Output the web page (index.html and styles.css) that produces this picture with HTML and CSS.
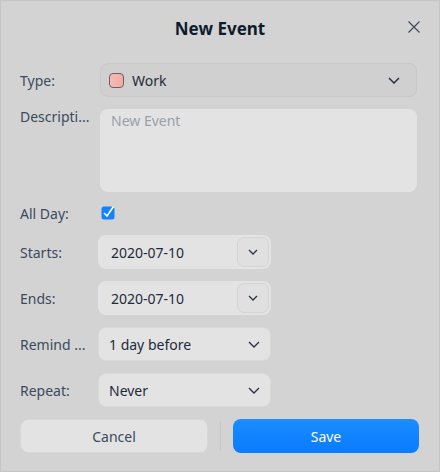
FILE: index.html
```html
<!DOCTYPE html>
<html>
<head>
<meta charset="utf-8">
<link rel="stylesheet" href="styles.css">
</head>
<body>
<div class="dialog">
  <div class="titlebar">
    <div class="title">New Event</div>
    <svg class="close" width="12" height="12" viewBox="0 0 12 12"><path d="M0.5 0.5L11.5 11.5M11.5 0.5L0.5 11.5" stroke="#3c4555" stroke-width="1.1" fill="none"/></svg>
  </div>
  <div class="form">
    <div class="label lab-mid">Type:</div>
    <div class="combo wide">
      <span class="swatch"></span><span class="val">Work</span>
      <svg class="chev" width="12" height="7" viewBox="0 0 12 7"><path d="M1 1L6 6L11 1" stroke="#2a3242" stroke-width="1.5" fill="none"/></svg>
    </div>

    <div class="label lab-top">Descripti...</div>
    <div class="textarea">New Event</div>

    <div class="label lab-mid">All Day:</div>
    <div class="checkrow">
      <svg width="16" height="16" viewBox="0 0 16 16"><rect x="0.5" y="2.5" width="13" height="13" rx="2.5" fill="#1482fa"/><path d="M3 9L6 12L12.5 2.5" stroke="#fff" stroke-width="1.6" fill="none"/></svg>
    </div>

    <div class="label lab-mid">Starts:</div>
    <div class="datebox"><span class="val">2020-07-10</span><span class="dbtn"><svg width="10" height="6" viewBox="0 0 10 6"><path d="M1 1L5 5L9 1" stroke="#2a3242" stroke-width="1.3" fill="none"/></svg></span></div>

    <div class="label lab-mid">Ends:</div>
    <div class="datebox"><span class="val">2020-07-10</span><span class="dbtn"><svg width="10" height="6" viewBox="0 0 10 6"><path d="M1 1L5 5L9 1" stroke="#2a3242" stroke-width="1.3" fill="none"/></svg></span></div>

    <div class="label lab-mid">Remind ...</div>
    <div class="combo short"><span class="val">1 day before</span><svg class="chev" width="12" height="7" viewBox="0 0 12 7"><path d="M1 1L6 6L11 1" stroke="#2a3242" stroke-width="1.4" fill="none"/></svg></div>

    <div class="label lab-mid">Repeat:</div>
    <div class="combo short"><span class="val">Never</span><svg class="chev" width="12" height="7" viewBox="0 0 12 7"><path d="M1 1L6 6L11 1" stroke="#2a3242" stroke-width="1.4" fill="none"/></svg></div>
  </div>
  <div class="buttons">
    <div class="btn cancel">Cancel</div>
    <div class="sep"></div>
    <div class="btn save">Save</div>
  </div>
</div>
</body>
</html>
```

FILE: styles.css
```css
html, body {
  margin: 0;
  padding: 0;
  background: #d3d3d3;
}
body {
  width: 440px;
  height: 472px;
  font-family: "Noto Sans", "Open Sans", sans-serif;
  font-size: 14px;
  color: #3a4454;
}
.dialog {
  box-sizing: border-box;
  width: 440px;
  height: 472px;
  border: 1px solid #c6c6c6;
  background: #d3d3d3;
  display: flex;
  flex-direction: column;
}
.titlebar {
  height: 54px;
  position: relative;
  display: flex;
  align-items: center;
  justify-content: center;
}
.title {
  font-size: 17px;
  font-weight: 700;
  color: #0f1b2d;
}
.close {
  position: absolute;
  right: 19px;
  top: 20px;
}
.form {
  margin-top: 8px;
  padding-left: 19px;
  padding-right: 22px;
  display: grid;
  grid-template-columns: 80px 1fr;
  row-gap: 12px;
  align-items: center;
}
.label {
  color: #3c4a5e;
  white-space: nowrap;
}
.lab-top {
  align-self: start;
  margin-top: -2px;
}
.combo {
  box-sizing: border-box;
  height: 34px;
  border-radius: 8px;
  border: 1px solid #c8c8c8;
  background: #d0d0d0;
  display: flex;
  align-items: center;
  padding: 0 10px;
  color: #1f2a3c;
}
.combo.wide {
  padding-left: 8px;
  padding-right: 16px;
}
.combo.short {
  width: 173px;
  margin-left: -2px;
  background: #e3e3e3;
  border-color: #dadada;
}
.combo .val {
  flex: 1;
}
.swatch {
  width: 15px;
  height: 15px;
  box-sizing: border-box;
  border: 1px solid #6f5f5e;
  border-radius: 4px;
  background: linear-gradient(90deg, #f6bcb3, #f1aca4);
  margin-right: 8px;
}
.textarea {
  box-sizing: border-box;
  height: 83px;
  border-radius: 8px;
  background: #e3e3e3;
  padding: 2px 11px;
  color: #9ba0a8;
  align-self: start;
}
.checkrow {
  height: 19px;
  display: flex;
  align-items: center;
  margin-left: 1px;
}
.checkrow svg {
  margin-top: -3px;
}
.datebox {
  box-sizing: border-box;
  width: 173px;
  height: 34px;
  margin-left: -2px;
  border-radius: 8px;
  background: #e3e3e3;
  display: flex;
  align-items: center;
  padding-left: 13px;
  padding-right: 2px;
  color: #1f2a3c;
}
.datebox .val {
  flex: 1;
}
.dbtn {
  box-sizing: border-box;
  width: 32px;
  height: 30px;
  border: 1px solid #d4d4d4;
  border-radius: 7px;
  background: #e0e0e0;
  display: flex;
  align-items: center;
  justify-content: center;
}
.buttons {
  margin-top: 12px;
  padding: 0 20px 0 19px;
  display: flex;
  align-items: center;
}
.btn {
  box-sizing: border-box;
  flex: 1;
  height: 34px;
  border-radius: 8px;
  display: flex;
  align-items: center;
  justify-content: center;
}
.cancel {
  background: #e3e3e3;
  border: 1px solid #d8d8d8;
  color: #3c4a5e;
}
.sep {
  width: 1px;
  height: 28px;
  background: #c4c4c4;
  margin: 0 12px;
}
.save {
  background: linear-gradient(180deg, #1a8dff, #0a7bfd);
  color: #ffffff;
}
```
